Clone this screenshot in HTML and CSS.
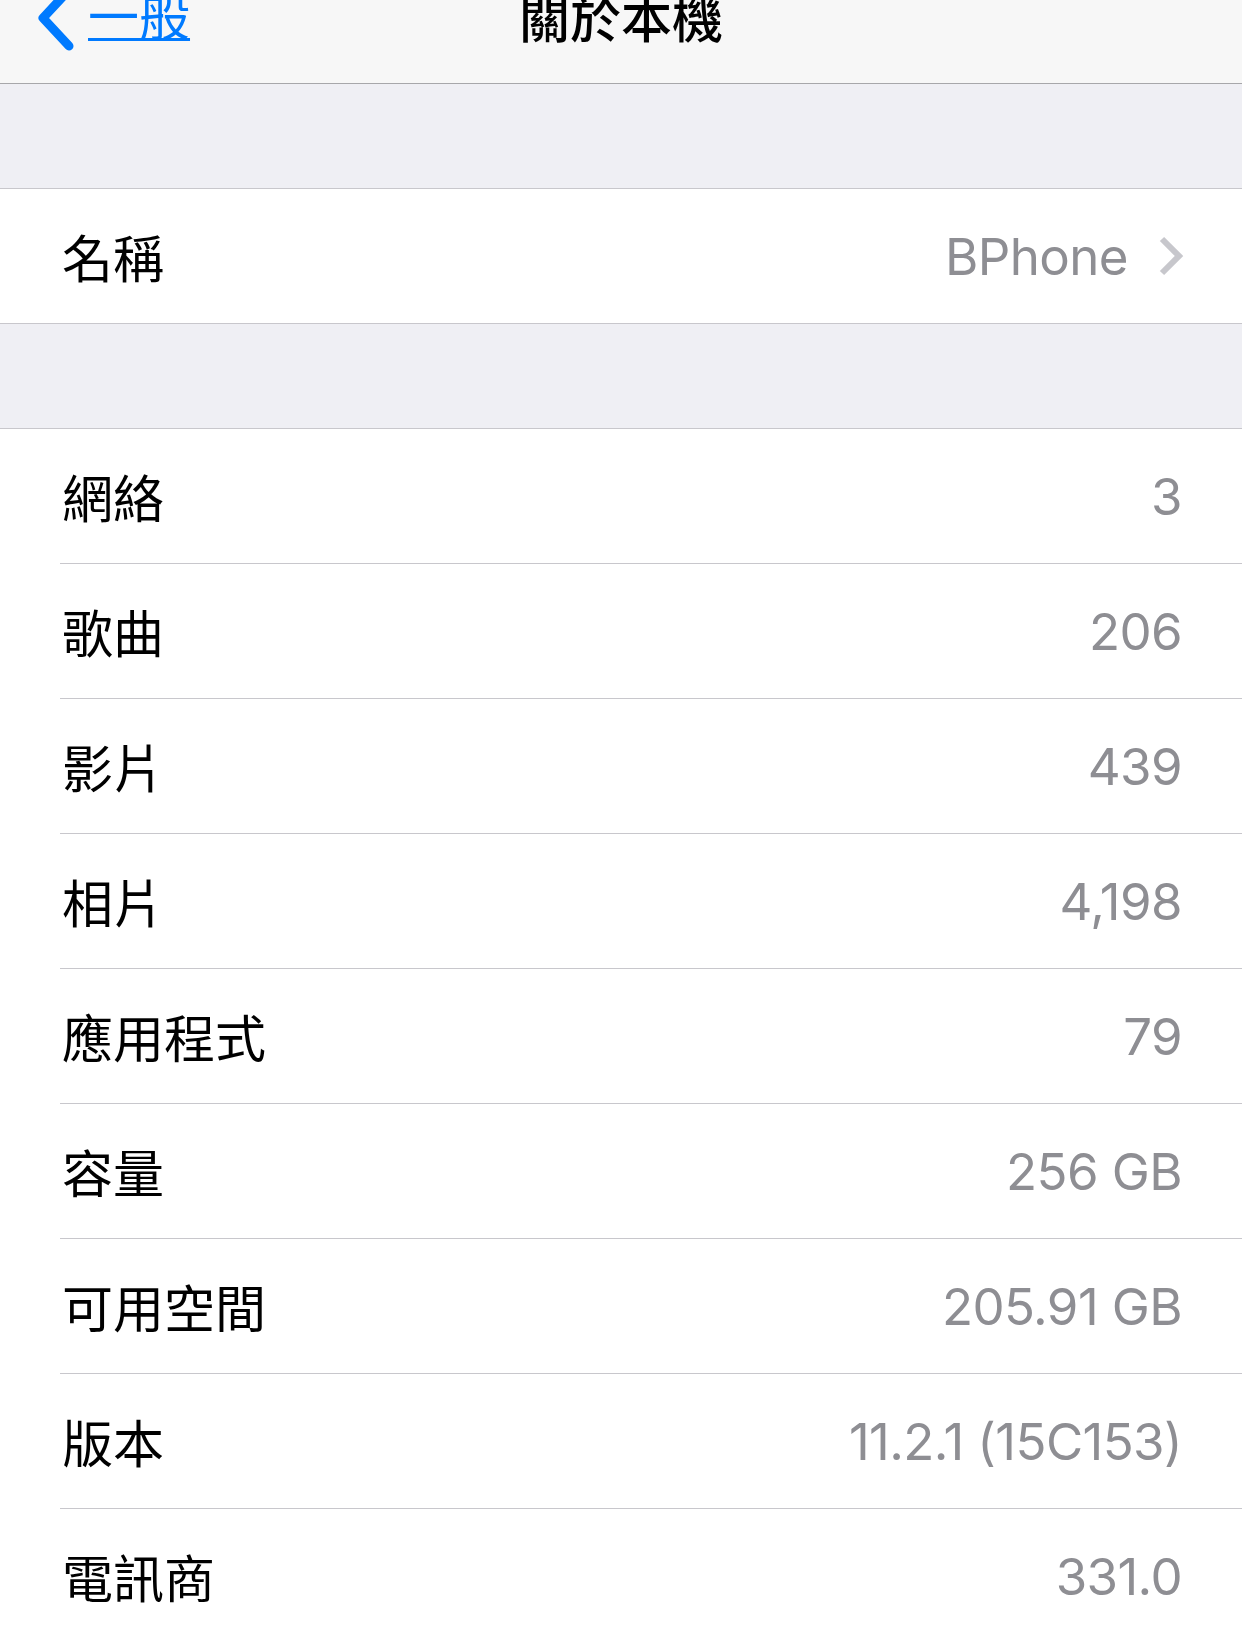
FILE: index.html
```html
<!DOCTYPE html>
<html lang="zh-Hant">
<head>
    <meta charset="UTF-8">
    <meta name="viewport" content="width=device-width, initial-scale=1.0">
    <title>關於本機</title>
    <link rel="stylesheet" href="styles.css">
</head>
<body>
    <header class="nav">
        <div class="nav-bar">
            <a class="nav-back" href="#">
                <svg class="back-chevron" width="40" height="66" viewBox="0 0 40 66">
                    <polyline points="33,5 7,33 33,61" fill="none" stroke="#007aff" stroke-width="9" stroke-linecap="round" stroke-linejoin="round"/>
                </svg>
                <span class="back-label">一般</span>
            </a>
            <h1 class="nav-title">關於本機</h1>
            <div></div>
        </div>
    </header>

    <div class="spacer"></div>

    <ul class="group">
        <li class="row">
            <span class="label">名稱</span>
            <span class="value">BPhone</span>
            <svg class="chevron" width="26" height="40" viewBox="0 0 26 40">
                <polyline points="4,3 21,20 4,37" fill="none" stroke="#c7c7cc" stroke-width="6"/>
            </svg>
        </li>
    </ul>

    <div class="spacer"></div>

    <ul class="group">
        <li class="row"><span class="label">網絡</span><span class="value">3</span></li>
        <li class="row"><span class="label">歌曲</span><span class="value">206</span></li>
        <li class="row"><span class="label">影片</span><span class="value">439</span></li>
        <li class="row"><span class="label">相片</span><span class="value">4,198</span></li>
        <li class="row"><span class="label">應用程式</span><span class="value">79</span></li>
        <li class="row"><span class="label">容量</span><span class="value">256 GB</span></li>
        <li class="row"><span class="label">可用空間</span><span class="value">205.91 GB</span></li>
        <li class="row"><span class="label">版本</span><span class="value">11.2.1 (15C153)</span></li>
        <li class="row"><span class="label">電訊商</span><span class="value">331.0</span></li>
    </ul>
</body>
</html>
```

FILE: styles.css
```css
body {
    font-family: Inter, "Noto Sans CJK TC", sans-serif;
    margin: 0;
    background-color: #efeff4;
    overflow: hidden;
}
.nav {
    height: 84px;
    box-sizing: border-box;
    background-color: #f7f7f7;
    border-bottom: 1px solid #a7a7aa;
    overflow: hidden;
}
.nav-bar {
    display: grid;
    grid-template-columns: 1fr auto 1fr;
    align-items: center;
    margin-top: -18px;
    height: 66px;
}
.nav-back {
    display: flex;
    align-items: center;
    padding-left: 36px;
    color: #007aff;
    text-decoration: none;
}
.back-label {
    margin-left: 12px;
    font-size: 51px;
    line-height: 66px;
    text-decoration: underline;
    text-decoration-thickness: 3px;
    text-underline-offset: 2px;
}
.nav-title {
    align-self: start;
    margin: 5px 0 0;
    font-size: 51px;
    font-weight: 500;
    line-height: 66px;
    color: #000;
}
.spacer {
    height: 104px;
}
.group {
    list-style: none;
    margin: 0;
    padding: 0 0 0 60px;
    background-color: #fff;
    border-top: 1px solid #c8c7cc;
    border-bottom: 1px solid #c8c7cc;
}
.row {
    display: flex;
    align-items: center;
    height: 135px;
    box-sizing: border-box;
    padding: 0 60px 0 2px;
    border-bottom: 1px solid #c8c7cc;
    font-size: 51px;
}
.row:last-child {
    border-bottom: none;
    height: 134px;
}
.label {
    flex: 1;
    color: #000;
}
.value {
    color: #8e8e93;
    letter-spacing: -0.6px;
}
.chevron {
    margin-left: 30px;
    margin-right: -2px;
}
```
